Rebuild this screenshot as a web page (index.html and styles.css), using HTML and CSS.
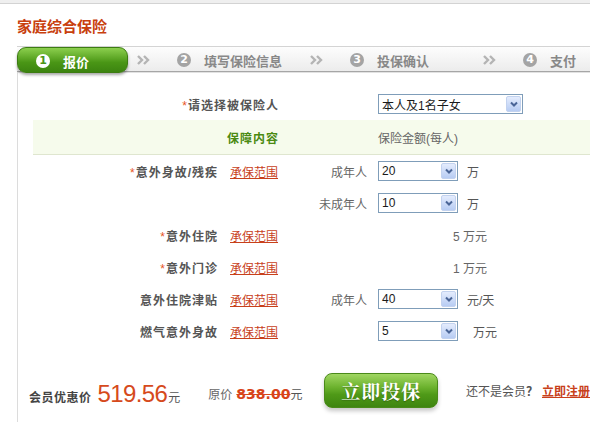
FILE: index.html
```html
<!DOCTYPE html>
<html lang="zh-CN">
<head>
    <meta charset="UTF-8">
    <title>家庭综合保险</title>
    <link rel="stylesheet" href="styles.css">
</head>
<body>
    <div class="topline"></div>
    <div class="page">
        <h1 class="title">家庭综合保险</h1>

        <div class="steps">
            <div class="step step-on"><span class="num">1</span>报价</div>
            <div class="step">
                <svg class="arrows" width="13" height="10" viewBox="0 0 13 10"><path d="M1 1 L5 5 L1 9 M7 1 L11 5 L7 9" fill="none" stroke="#b4b4b4" stroke-width="2.4"/></svg>
                <span class="num">2</span>填写保险信息
            </div>
            <div class="step">
                <svg class="arrows" width="13" height="10" viewBox="0 0 13 10"><path d="M1 1 L5 5 L1 9 M7 1 L11 5 L7 9" fill="none" stroke="#b4b4b4" stroke-width="2.4"/></svg>
                <span class="num">3</span>投保确认
            </div>
            <div class="step step-last">
                <svg class="arrows" width="13" height="10" viewBox="0 0 13 10"><path d="M1 1 L5 5 L1 9 M7 1 L11 5 L7 9" fill="none" stroke="#b4b4b4" stroke-width="2.4"/></svg>
                <span class="num">4</span>支付
            </div>
        </div>

        <div class="main">
            <div class="row">
                <div class="lbl lbl-wide"><span class="star">*</span>请选择被保险人</div>
                <div></div>
                <div class="val">
                    <div class="select select-wide"><span>本人及1名子女</span><span class="btn"><svg width="8" height="6" viewBox="0 0 8 6"><path d="M1 1.5 L4 4.5 L7 1.5" fill="none" stroke="#4a6597" stroke-width="2"/></svg></span></div>
                </div>
            </div>
            <div class="row row-head">
                <div class="lbl lbl-wide head">保障内容</div>
                <div></div>
                <div class="val muted">保险金额(每人)</div>
            </div>
            <div class="row">
                <div class="lbl"><span class="star">*</span>意外身故/残疾</div>
                <div class="link"><a href="#">承保范围</a></div>
                <div class="sub">成年人</div>
                <div class="val">
                    <div class="select"><span>20</span><span class="btn"><svg width="8" height="6" viewBox="0 0 8 6"><path d="M1 1.5 L4 4.5 L7 1.5" fill="none" stroke="#4a6597" stroke-width="2"/></svg></span></div>
                    <span class="unit">万</span>
                </div>
            </div>
            <div class="row">
                <div></div>
                <div></div>
                <div class="sub">未成年人</div>
                <div class="val">
                    <div class="select"><span>10</span><span class="btn"><svg width="8" height="6" viewBox="0 0 8 6"><path d="M1 1.5 L4 4.5 L7 1.5" fill="none" stroke="#4a6597" stroke-width="2"/></svg></span></div>
                    <span class="unit">万</span>
                </div>
            </div>
            <div class="row">
                <div class="lbl"><span class="star">*</span>意外住院</div>
                <div class="link"><a href="#">承保范围</a></div>
                <div></div>
                <div class="val val-center muted">5 万元</div>
            </div>
            <div class="row">
                <div class="lbl"><span class="star">*</span>意外门诊</div>
                <div class="link"><a href="#">承保范围</a></div>
                <div></div>
                <div class="val val-center muted">1 万元</div>
            </div>
            <div class="row">
                <div class="lbl">意外住院津贴</div>
                <div class="link"><a href="#">承保范围</a></div>
                <div class="sub">成年人</div>
                <div class="val">
                    <div class="select"><span>40</span><span class="btn"><svg width="8" height="6" viewBox="0 0 8 6"><path d="M1 1.5 L4 4.5 L7 1.5" fill="none" stroke="#4a6597" stroke-width="2"/></svg></span></div>
                    <span class="unit">元/天</span>
                </div>
            </div>
            <div class="row">
                <div class="lbl">燃气意外身故</div>
                <div class="link"><a href="#">承保范围</a></div>
                <div></div>
                <div class="val">
                    <div class="select"><span>5</span><span class="btn"><svg width="8" height="6" viewBox="0 0 8 6"><path d="M1 1.5 L4 4.5 L7 1.5" fill="none" stroke="#4a6597" stroke-width="2"/></svg></span></div>
                    <span class="unit unit-far">万元</span>
                </div>
            </div>

            <div class="price-bar">
                <div class="deal">
                    <span class="vip">会员优惠价</span>
                    <span class="price">519.56</span>
                    <span>元</span>
                </div>
                <div class="deal old">
                    <span class="muted">原价</span>
                    <span class="old-num">838.00</span>
                    <span>元</span>
                </div>
                <button class="buy">立即投保</button>
                <div class="join">还不是会员<b>？</b><a href="#">立即注册</a></div>
            </div>
        </div>
    </div>
</body>
</html>
```

FILE: styles.css
```css
body {
    margin: 0;
    font-family: "Liberation Sans", "Noto Sans CJK SC", sans-serif;
    font-size: 12px;
    color: #555;
    background-color: #fff;
    overflow: hidden;
}
.topline {
    height: 3px;
    background-color: #efefef;
    border-bottom: 1px solid #d3d3d3;
}
.page {
    padding-left: 17px;
}
.title {
    margin: 12px 0 9px;
    font-size: 15px;
    line-height: 21px;
    color: #c8400e;
    font-weight: bold;
}

/* step bar */
.steps {
    display: flex;
    align-items: flex-start;
    height: 24px;
    border-top: 1px solid #d4d4d4;
    border-bottom: 1px solid #a6a6a6;
    box-shadow: 0 1px 0 #e2e2e2;
    background: linear-gradient(#fdfdfd, #ececec);
}
.step {
    width: 173px;
    height: 24px;
    box-sizing: border-box;
    padding-top: 2px;
    display: flex;
    align-items: center;
    flex-shrink: 0;
    color: #888;
    font-size: 13px;
    font-weight: bold;
    white-space: nowrap;
}
.step-last {
    width: auto;
}
.step .arrows {
    margin: 0 27px 0 9px;
}
.num {
    width: 14px;
    height: 14px;
    border-radius: 50%;
    background-color: #a4a4a4;
    color: #fff;
    font-size: 11px;
    line-height: 14px;
    text-align: center;
    margin-right: 13px;
    font-family: "DejaVu Sans", sans-serif;
}
.step-on {
    width: 111px;
    height: 26px;
    padding-left: 18px;
    border: 1px solid #3d7c12;
    border-radius: 9px;
    background: linear-gradient(#8ccf4e, #5ba524 45%, #4a9616 60%, #3c8410);
    box-shadow: 0 2px 3px rgba(0, 0, 0, 0.35);
    color: #fff;
    position: relative;
    z-index: 1;
}
.step-on .num {
    background-color: #fff;
    color: #4a9418;
}

/* form rows */
.main {
    border-left: 1px solid #dcdcdc;
    padding: 16px 0 14px;
    overflow: hidden;
}
.row {
    display: grid;
    grid-template-columns: 184px 61px 89px 195px;
    height: 32px;
    align-items: center;
    margin-left: 15px;
    white-space: nowrap;
}
.row-head {
    height: 34px;
    background-color: #f6fbec;
    border-bottom: 1px solid #dfe6cf;
}
.lbl {
    text-align: right;
    font-weight: bold;
    color: #555;
    letter-spacing: 1px;
    margin-right: -1px;
}
.lbl-wide {
    grid-column: 1 / 3;
}
.head {
    color: #4b8a12;
}
.star {
    color: #e8541e;
    font-weight: normal;
}
.link {
    padding-left: 13px;
}
a {
    color: #c8401a;
    text-decoration: underline;
}
.sub {
    text-align: right;
    color: #666;
}
.muted {
    color: #666;
}
.val {
    padding-left: 11px;
    display: flex;
    align-items: center;
}
.val-center {
    justify-content: center;
}
.unit {
    margin-left: 9px;
}
.unit-far {
    margin-left: 15px;
}

/* fake select */
.select {
    width: 80px;
    height: 20px;
    box-sizing: border-box;
    padding: 1px 1px 1px 3px;
    border: 1px solid #7f9db9;
    background-color: #fff;
    display: flex;
    align-items: center;
    justify-content: space-between;
    color: #1a1a1a;
}
.select-wide {
    width: 145px;
}
.select .btn {
    width: 15px;
    height: 16px;
    box-sizing: border-box;
    border: 1px solid #c2d2ef;
    border-radius: 2px;
    background: linear-gradient(#e4ecfd, #b7ccf3);
    display: flex;
    align-items: center;
    justify-content: center;
}

/* price bar */
.price-bar {
    display: flex;
    align-items: center;
    height: 35px;
    margin-top: 26px;
    padding-left: 11px;
    white-space: nowrap;
}
.deal {
    display: flex;
    align-items: baseline;
    padding-top: 6px;
}
.vip {
    font-weight: bold;
    color: #444;
    letter-spacing: 0.5px;
    margin-right: 6px;
}
.price {
    font-size: 24px;
    letter-spacing: -0.6px;
    color: #d64a1c;
    margin-right: 1px;
}
.old {
    margin-left: 28px;
}
.old-num {
    font-family: "DejaVu Sans", sans-serif;
    font-size: 14px;
    font-weight: bold;
    color: #d8441a;
    text-decoration: line-through;
    margin-left: 4px;
}
.buy {
    width: 126px;
    height: 35px;
    margin-left: 22px;
    border: 1px solid #4a8a1a;
    border-radius: 8px;
    background: linear-gradient(#a0d662, #6cb22e 40%, #4f9a18 62%, #3e8510);
    box-shadow: 0 3px 4px rgba(0, 0, 0, 0.22);
    color: #fff;
    font-family: "Noto Serif CJK SC", "Noto Sans CJK SC", serif;
    font-size: 19px;
    font-weight: bold;
    letter-spacing: 1px;
    text-shadow: 0 1px 1px rgba(0, 0, 0, 0.3);
    cursor: pointer;
}
.join {
    margin-left: 28px;
    color: #555;
}
.join b {
    color: #555;
}
.join a {
    font-weight: bold;
    margin-left: 4px;
}
```
